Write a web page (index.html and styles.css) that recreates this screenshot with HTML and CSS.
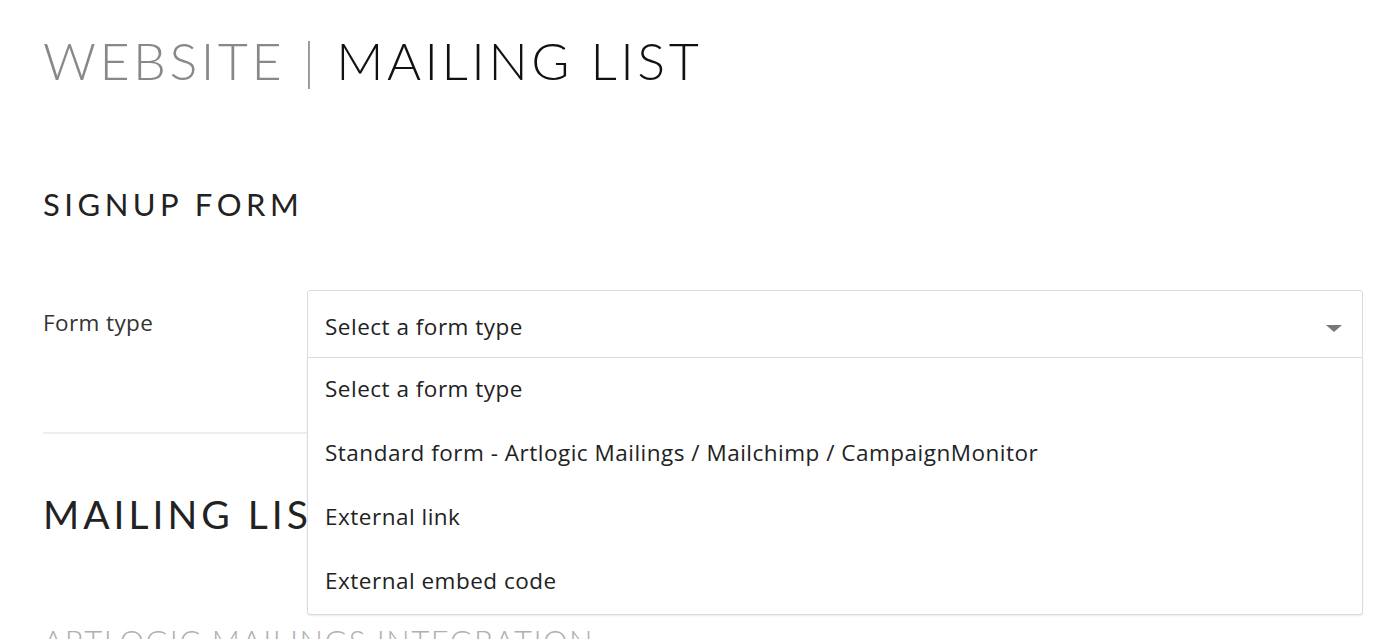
FILE: index.html
```html
<!DOCTYPE html>
<html lang="en">
<head>
  <meta charset="UTF-8">
  <title>Website | Mailing list</title>
  <link rel="stylesheet" href="styles.css">
</head>
<body>
  <div class="page">
    <h1 class="title"><span class="crumb">WEBSITE <span class="sep">|</span></span> MAILING LIST</h1>

    <h2 class="section">SIGNUP FORM</h2>

    <div class="row">
      <label class="label">Form type</label>
      <div class="select">
        <div class="select-value">
          <span>Select a form type</span>
          <span class="arrow"></span>
        </div>
        <ul class="options">
          <li>Select a form type</li>
          <li>Standard form - Artlogic Mailings / Mailchimp / CampaignMonitor</li>
          <li>External link</li>
          <li>External embed code</li>
        </ul>
      </div>
    </div>

    <hr class="divider">

    <h2 class="big">MAILING LIST</h2>

    <h3 class="sub">ARTLOGIC MAILINGS INTEGRATION</h3>
  </div>
</body>
</html>
```
FILE: styles.css
```css
*{
  margin: 0;
  padding: 0;
  box-sizing: border-box;
}
html, body{
  height: 639px;
  overflow: hidden;
}
body{
  font-family: Lato, "Noto Sans", sans-serif;
  color: #222;
  background: #fff;
}
.page{
  height: 639px;
  padding: 28px 24px 0 43px;
}
.title{
  font-weight: 300;
  font-size: 52px;
  letter-spacing: 3.5px;
  line-height: 64px;
  color: #111;
}
.crumb{
  color: #888;
}
.sep{
  color: #999;
}
.section{
  margin-top: 92px;
  font-weight: 400;
  font-size: 31px;
  letter-spacing: 4.5px;
  line-height: 40px;
}
.row{
  display: flex;
  margin-top: 66px;
  padding-bottom: 74px;
}
.label{
  width: 264px;
  font-family: "Open Sans", sans-serif;
  font-size: 22.5px;
  letter-spacing: 0.4px;
  padding-top: 17px;
  color: #333;
}
.select{
  position: relative;
  flex: 1;
}
.select-value{
  display: flex;
  align-items: center;
  justify-content: space-between;
  height: 68px;
  padding: 4px 20px 0 17px;
  border: 1px solid #dcdcdc;
  border-radius: 3px 3px 0 0;
  font-family: "Open Sans", sans-serif;
  font-size: 22.5px;
  letter-spacing: 0.5px;
  color: #222;
}
.arrow{
  width: 0;
  height: 0;
  margin-top: 4px;
  border-left: 8px solid transparent;
  border-right: 8px solid transparent;
  border-top: 7px solid #777;
}
.options{
  position: absolute;
  left: 0;
  right: 0;
  top: 67px;
  background: #fff;
  border: 1px solid #dcdcdc;
  border-radius: 0 0 3px 3px;
  box-shadow: 0 1px 2px rgba(0, 0, 0, 0.08);
  list-style: none;
}
.options li{
  height: 64px;
  line-height: 62px;
  padding-left: 17px;
  font-family: "Open Sans", sans-serif;
  font-size: 22.5px;
  letter-spacing: 0.5px;
  color: #222;
}
.divider{
  border: 0;
  border-top: 2px solid #eee;
}
.big{
  margin-top: 55px;
  font-weight: 400;
  font-size: 39px;
  letter-spacing: 4px;
  line-height: 50px;
}
.sub{
  margin-top: 82px;
  font-weight: 300;
  font-size: 31px;
  letter-spacing: 1.5px;
  line-height: 40px;
  color: #b0b0b0;
}
```
